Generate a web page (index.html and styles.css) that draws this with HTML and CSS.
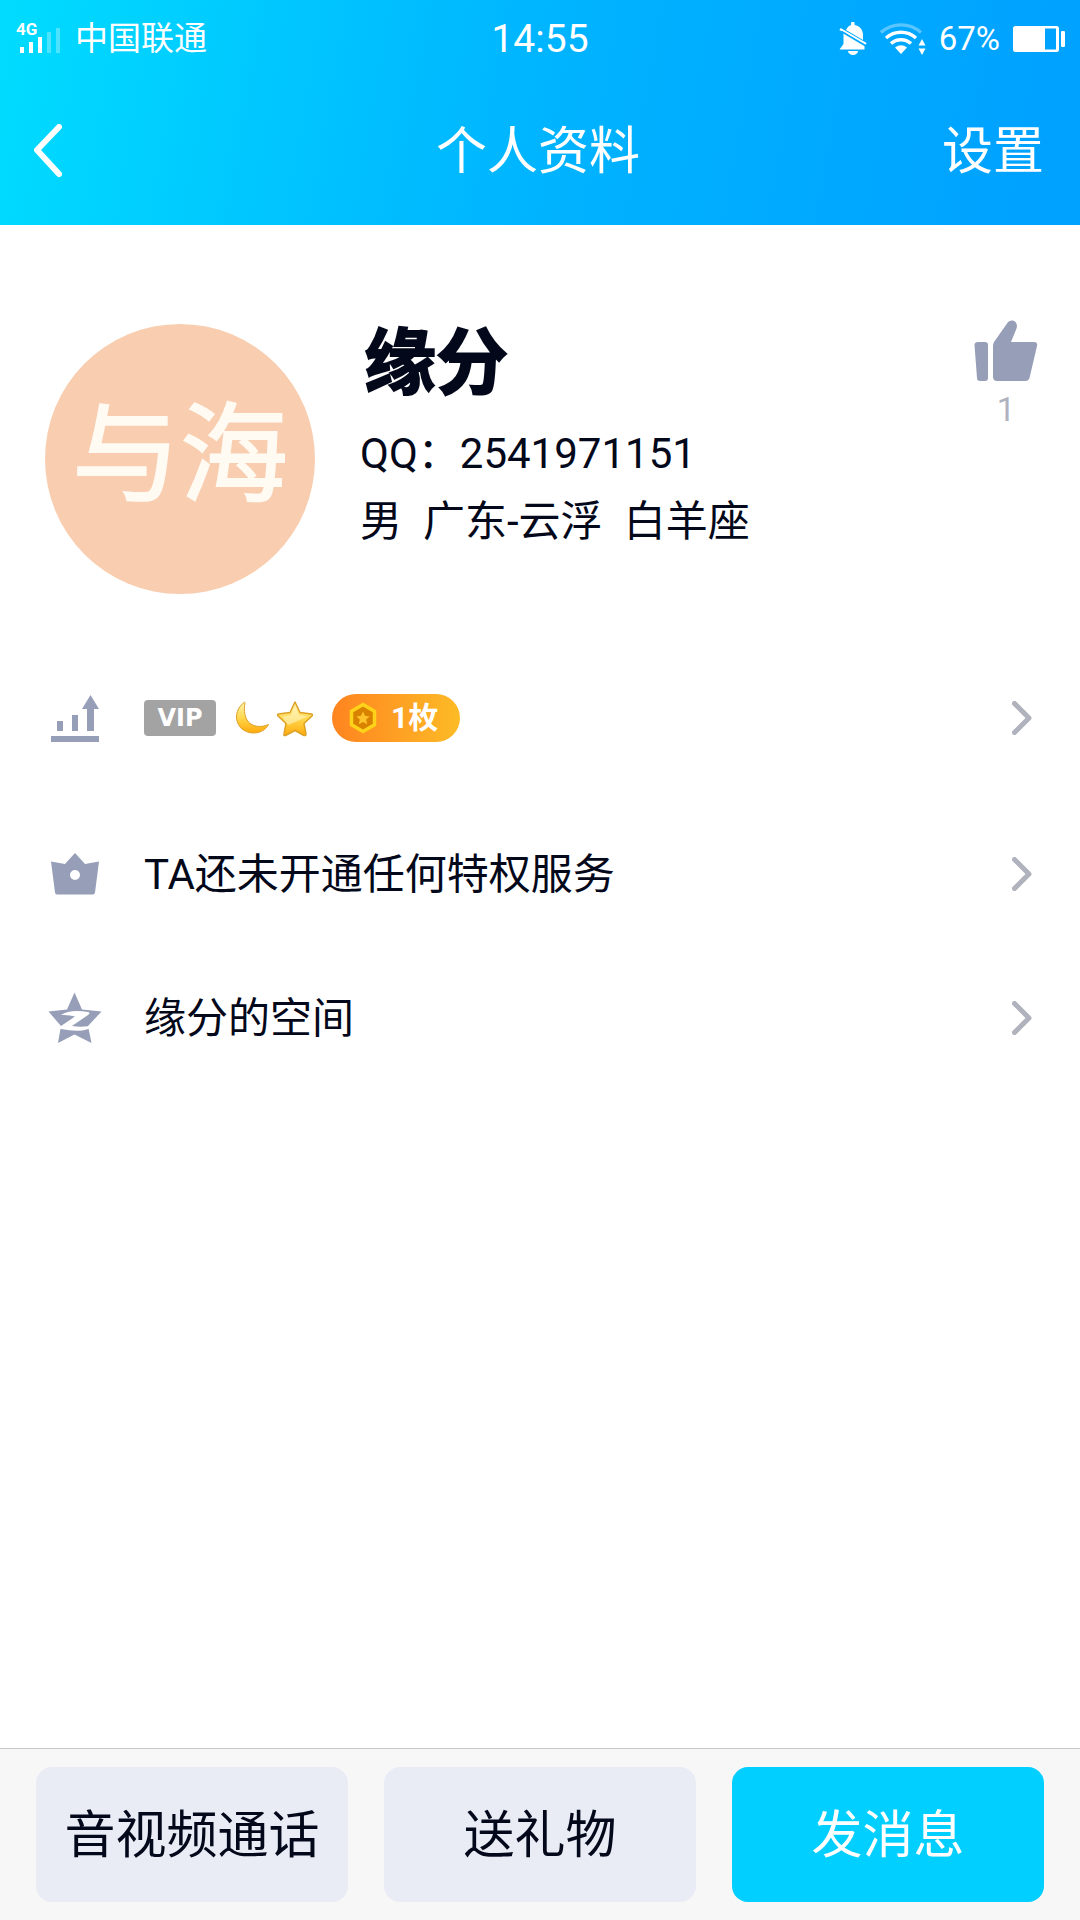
FILE: index.html
```html
<!DOCTYPE html>
<html lang="zh-CN">
<head>
<meta charset="utf-8">
<meta name="viewport" content="width=device-width, initial-scale=1">
<title>个人资料</title>
<link rel="stylesheet" href="styles.css">
</head>
<body>
<header class="top">
  <div class="status">
    <div class="status-left">
      <svg class="signal" width="48" height="36" viewBox="0 0 48 36" fill="#fff">
        <text class="signal-type" x="1" y="14">4G</text>
        <rect x="5" y="26" width="4" height="6"/>
        <rect x="14" y="21" width="4" height="11"/>
        <rect x="23" y="16" width="4" height="16"/>
        <rect x="32" y="11" width="4" height="21" opacity=".3"/>
        <rect x="41" y="7" width="4" height="25" opacity=".3"/>
      </svg>
      <span class="carrier">中国联通</span>
    </div>
    <time class="clock">14:55</time>
    <div class="status-right">
      <svg width="28" height="34" viewBox="0 0 28 34" fill="#fff">
        <path d="M12 3V1.500a1.800 1.800 0 0 1 3.600 0V3C21 4 24 8 24 13v5L7 8c1.200-2.600 3-4.300 5-5Z"/>
        <path d="M4.500 10.500 25.500 23v4.500H.500L4.500 22Z"/>
        <path d="m1 7 26 15" stroke="#fff" stroke-width="2.400"/>
        <path d="m2.500 9.500 24.500 14.500" stroke="#00a6ff" stroke-width="1.600"/>
        <path d="M9 29h10a5 4 0 0 1-10 0Z"/>
      </svg>
      <svg width="46" height="34" viewBox="0 0 46 34" fill="none" stroke="#fff" stroke-width="3.400">
        <path d="M1 10.500a30 30 0 0 1 40 0" opacity=".35"/>
        <path d="M6 16a22.500 22.500 0 0 1 30 0"/>
        <path d="M11 21.500a15 15 0 0 1 20 0"/>
        <path d="M15 25.500q6-4.500 12 0L21 32Z" fill="#fff" stroke="none"/>
        <path d="M38.500 23.500 42 17l3.500 6.500ZM38.500 26.500h7L42 33Z" fill="#fff" stroke="none"/>
      </svg>
      <span class="percent">67%</span>
      <svg width="52" height="28" viewBox="0 0 52 28" fill="#fff">
        <path fill-rule="evenodd" d="M2.500 1h41a2.500 2.500 0 0 1 2.500 2.500v21a2.500 2.500 0 0 1-2.500 2.500h-41A2.500 2.500 0 0 1 0 24.500v-21A2.500 2.500 0 0 1 2.500 1ZM32 3.500v21h11v-21Z"/>
        <rect x="48" y="6" width="4" height="16" rx="1"/>
      </svg>
    </div>
  </div>
  <nav class="nav">
    <button class="back" type="button" aria-label="返回">
      <svg width="30" height="56" viewBox="0 0 30 56" fill="none" stroke="#fff" stroke-width="6" stroke-linecap="round" stroke-linejoin="round"><path d="M27 3 5 26l22 24"/></svg>
    </button>
    <h1 class="title">个人资料</h1>
    <a class="settings" href="#settings">设置</a>
  </nav>
</header>

<main class="content">
  <section class="profile">
    <div class="avatar">与海</div>
    <div class="info">
      <h2 class="name">缘分</h2>
      <p class="line">QQ：2541971151</p>
      <p class="line details"><span>男</span><span>广东-云浮</span><span>白羊座</span></p>
    </div>
    <button class="like" type="button">
      <svg width="66" height="62" viewBox="0 0 66 62" fill="#979fb8">
        <path d="M5 22h7q3 0 3 3v33q0 3-3 3H7q-3 0-3-3L1.500 25q0-3 3.500-3Z"/>
        <path d="M21 22 34 3.500c4-6 12-2 9.500 5L38 22h23q4 0 3 4l-7.500 32q-1 3-4 3H24q-4 0-4-4V26q0-2 1-4Z"/>
      </svg>
      <span>1</span>
    </button>
  </section>

  <a class="row row-level" href="#level">
    <svg class="row-icon" width="60" height="60" viewBox="0 0 60 60" fill="#979fb8">
      <rect x="6" y="48" width="48" height="6"/>
      <rect x="12" y="33" width="6" height="10"/>
      <rect x="27" y="27" width="6" height="16"/>
      <path d="M42 43V21h-5L45.500 7 54 21h-5v22Z"/>
    </svg>
    <span class="badges">
      <span class="vip">VIP</span>
      <svg class="rank" width="78" height="38" viewBox="0 0 78 38">
        <defs>
          <linearGradient id="gold" x1="0" y1="0" x2="0" y2="1">
            <stop offset="0" stop-color="#fff3ae"/><stop offset=".5" stop-color="#ffd84e"/><stop offset="1" stop-color="#ffa90a"/>
          </linearGradient>
        </defs>
        <path d="M9 3.500C.500 10-1 21 5.500 28.500 13 36.500 28 36 33.500 25.500 26 29 16 28 12 21 9 15.500 9 9 10 4.500 10.200 3 9.500 3 9 3.500Z" fill="url(#gold)" stroke="#dda128" stroke-width="1"/>
        <path d="m60 3 5 10.500 11.500 1.500q1.500.5.500 2L69 24.500l2 10.500q0 2-2 1.500L60 31.500l-9.500 5q-2 .5-1.500-1.500l2-10.500L43 17q-1-1.500.5-2L55 13.500Z" fill="url(#gold)" stroke="#dda128" stroke-width="1.500" stroke-linejoin="round"/>
        <path d="m60 7 4 9 9 1.500L53 26l-6-8 9-2Z" fill="#fff8cd" opacity=".55"/>
      </svg>
      <span class="medal">
        <svg width="28" height="32" viewBox="0 0 28 32">
          <path d="m14 2.500 11.500 6.800v13.400L14 29.500 2.500 22.700V9.300Z" fill="#d98200" stroke="#ffd21a" stroke-width="3.500"/>
          <path d="m14 9.500 2 4.300 4.600.6-3.400 3.200.9 4.700-4.100-2.300-4.100 2.300.9-4.700-3.400-3.200 4.600-.6Z" fill="#ffc22b"/>
        </svg>
        <span>1枚</span>
      </span>
    </span>
    <svg class="chevron" width="20" height="34" viewBox="0 0 20 34"><path d="m2.500 2.500 14.500 14.500L2.500 31.500"/></svg>
  </a>

  <a class="row" href="#privilege">
    <svg class="row-icon" width="60" height="60" viewBox="0 0 60 60" fill="#979fb8">
      <path fill-rule="evenodd" d="M6 17.500 20 20 30 9l10 11 14-2.500-4 31q-.300 2-2 2H12q-1.700 0-2-2ZM30 26a5 5 0 1 0 0 10 5 5 0 0 0 0-10Z"/>
    </svg>
    <span class="row-text">TA还未开通任何特权服务</span>
    <svg class="chevron" width="20" height="34" viewBox="0 0 20 34"><path d="m2.500 2.500 14.500 14.500L2.500 31.500"/></svg>
  </a>

  <a class="row" href="#qzone">
    <svg class="row-icon" width="60" height="60" viewBox="0 0 60 60">
      <path d="m29.500 4.500 7.500 17 19.500 2L43 38l3.500 17-17-8.500-16.500 8.500L16 38 3.500 23.500l18.500-2Z" fill="#979fb8"/>
      <path d="M16 27q9-6 27-3 3 1 0 3L27 38q11 2 23-1-9 9-34 4-3-1 0-3l14-9.500q-6-2-14-1.500Z" fill="#fff"/>
    </svg>
    <span class="row-text">缘分的空间</span>
    <svg class="chevron" width="20" height="34" viewBox="0 0 20 34"><path d="m2.500 2.500 14.500 14.500L2.500 31.500"/></svg>
  </a>
</main>

<footer class="actions">
  <button class="action" type="button">音视频通话</button>
  <button class="action" type="button">送礼物</button>
  <button class="action action-primary" type="button">发消息</button>
</footer>
</body>
</html>
```
FILE: styles.css
```css
* {
  box-sizing: border-box;
  margin: 0;
  padding: 0;
}

body {
  display: flex;
  flex-direction: column;
  min-height: 100vh;
  background: #fff;
  color: #03081a;
  font-family: Roboto, "Noto Sans CJK SC", sans-serif;
  font-size: 42px;
}

button {
  border: 0;
  background: none;
  color: inherit;
  font: inherit;
}

a {
  color: inherit;
  text-decoration: none;
}

svg {
  display: block;
  flex: none;
}

/* Header */
.top {
  background: linear-gradient(100deg, #00dcff 0%, #00bfff 35%, #00b3ff 52%, #00a2ff 95%);
  color: #fff;
}

.status,
.nav {
  display: grid;
  grid-template-columns: 1fr auto 1fr;
  align-items: center;
}

.status {
  height: 78px;
  padding: 0 15px;
}

.status-left,
.status-right {
  display: flex;
  align-items: center;
}

.status-left {
  gap: 12px;
}

.status-right {
  justify-content: flex-end;
  gap: 13px;
}

.signal {
  overflow: visible;
}

.signal-type {
  font-size: 17px;
  font-weight: 700;
}

.carrier,
.percent {
  font-size: 33px;
  line-height: 40px;
}

.clock {
  font-size: 39px;
  line-height: 48px;
}

.nav {
  height: 147px;
  padding: 0 36px 0 32px;
}

.back {
  justify-self: start;
}

.title,
.settings {
  font-size: 51px;
  font-weight: 400;
  line-height: 72px;
}

.settings {
  justify-self: end;
}

/* Profile */
.content {
  flex: 1;
}

.profile {
  display: flex;
  align-items: flex-start;
  gap: 45px;
  padding: 95px 41px 40px 45px;
}

.avatar {
  flex: none;
  width: 270px;
  height: 270px;
  margin-top: 4px;
  border-radius: 50%;
  background: #f9cdaf;
  color: #fffaf2;
  font-size: 108px;
  line-height: 264px;
  text-align: center;
  -webkit-text-stroke: 2px #fffaf2;
}

.info {
  flex: 1;
  padding-top: 6px;
}

.name {
  margin-bottom: 18px;
  padding-left: 4px;
  font-size: 72px;
  font-weight: 700;
  line-height: 76px;
  -webkit-text-stroke: 2px #03081a;
}

.line {
  line-height: 68px;
}

.details {
  display: flex;
  gap: 21px;
}

.like {
  display: flex;
  flex-direction: column;
  align-items: center;
  gap: 8px;
  color: #b0b3bf;
  font-size: 33px;
  line-height: 40px;
}

/* List rows */
.row {
  display: flex;
  align-items: center;
  gap: 39px;
  height: 144px;
  padding: 0 48px 0 45px;
}

.row-level {
  height: 168px;
}

.row-text,
.badges {
  flex: 1;
}

.row-text {
  padding-bottom: 7px;
}

.badges {
  display: flex;
  align-items: center;
  gap: 19px;
}

.vip {
  width: 72px;
  border-radius: 4px;
  background: #a3a3a3;
  color: #fff;
  font-family: "DejaVu Sans", sans-serif;
  font-size: 24px;
  font-weight: 700;
  line-height: 36px;
  text-align: center;
}

.medal {
  display: flex;
  align-items: center;
  gap: 14px;
  height: 48px;
  padding: 0 22px 0 17px;
  border-radius: 24px;
  background: linear-gradient(90deg, #ff8420, #fdbb26);
  color: #fff;
  font-size: 30px;
  font-weight: 700;
  line-height: 48px;
}

.chevron {
  fill: none;
  stroke: #b0b2be;
  stroke-width: 5;
  stroke-linecap: round;
  stroke-linejoin: round;
}

/* Bottom actions */
.actions {
  display: flex;
  gap: 36px;
  padding: 18px 36px;
  border-top: 1px solid #c8c8c8;
  background: #f7f7f8;
}

.action {
  flex: 1 1 0;
  height: 135px;
  padding-bottom: 7px;
  border-radius: 16px;
  background: #e9ecf5;
  font-size: 51px;
}

.action-primary {
  background: #00cfff;
  color: #fff;
}
```
